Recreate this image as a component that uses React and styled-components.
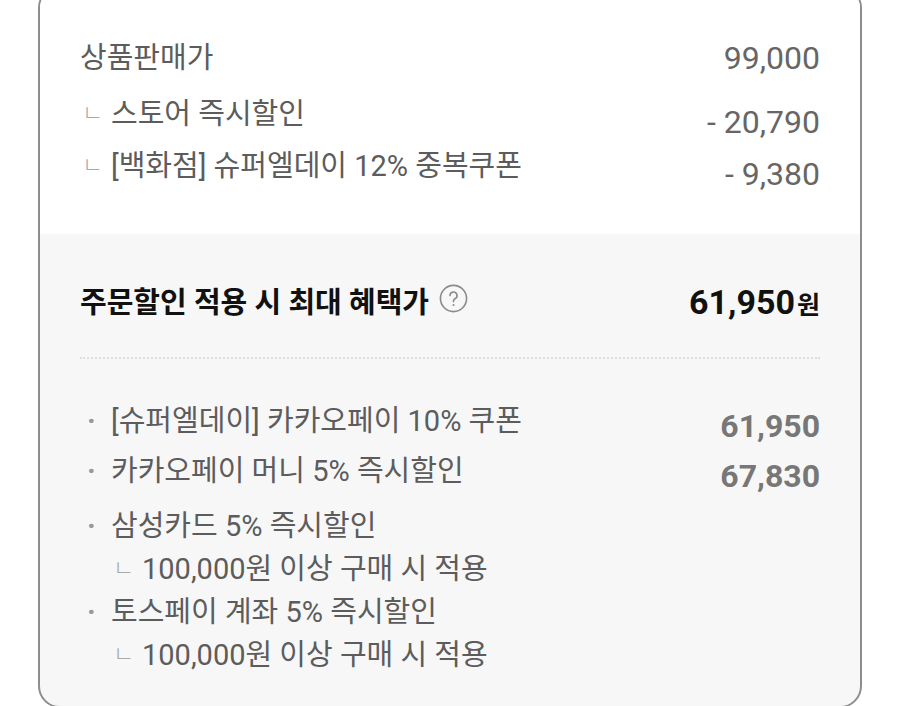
import React from 'react';
import styled, { createGlobalStyle } from 'styled-components';

const GlobalStyle = createGlobalStyle`
  html, body {
    margin: 0;
    padding: 0;
    background: #ffffff;
  }
  body {
    font-family: "Roboto", "Noto Sans CJK KR", sans-serif;
    overflow: hidden;
  }
`;

const Card = styled.div`
  margin: -14px 0 0 38px;
  width: 820px;
  height: 718px;
  border: 2px solid #8d8d8d;
  border-radius: 22px;
  overflow: hidden;
  display: flex;
  flex-direction: column;
  background: #f7f7f7;
`;

const PriceSection = styled.section`
  background: #ffffff;
  padding: 44px 40px 42px 40px;
  display: flex;
  flex-direction: column;
`;

const Row = styled.div`
  display: flex;
  justify-content: space-between;
  align-items: flex-start;
  height: ${p => p.h || 52}px;
`;

const Label = styled.span`
  font-size: 29px;
  line-height: 52px;
  color: #5c5c5c;
  display: flex;
  align-items: center;
`;

const Corner = styled.span`
  font-size: 23px;
  font-weight: 300;
  color: #a8a8a8;
  width: 31px;
  padding-left: 2px;
  box-sizing: border-box;
`;

const Value = styled.span`
  font-size: 32px;
  line-height: 52px;
  color: #666666;
  margin-top: ${p => p.shift || 0}px;
`;

const BenefitSection = styled.section`
  flex: 1;
  padding: 36px 40px 0 40px;
  display: flex;
  flex-direction: column;
`;

const TotalRow = styled.div`
  display: flex;
  justify-content: space-between;
  align-items: center;
  height: 60px;
  padding-bottom: 27px;
  border-bottom: 2px dotted #dedede;
`;

const TotalLabel = styled.div`
  display: flex;
  align-items: center;
  gap: 10px;
  font-size: 29px;
  font-weight: 700;
  color: #111111;
`;

const TotalPrice = styled.div`
  font-size: 34px;
  font-weight: 700;
  color: #111111;
  margin-top: 4px;
  span {
    font-size: 25px;
    margin-left: 2px;
  }
`;

const HelpIcon = styled.svg`
  width: 29px;
  height: 29px;
  margin-top: -4px;
`;

const List = styled.div`
  padding-top: 40px;
  display: flex;
  flex-direction: column;
`;

const Item = styled.div`
  display: flex;
  flex-direction: column;
  margin-bottom: ${p => p.gap || 0}px;
`;

const ItemLine = styled.div`
  display: flex;
  justify-content: space-between;
  align-items: flex-start;
  height: 44px;
`;

const ItemLabel = styled.span`
  font-size: 29px;
  line-height: 44px;
  color: #5c5c5c;
  display: flex;
  align-items: center;
`;

const Bullet = styled.span`
  width: 31px;
  padding-left: 7px;
  box-sizing: border-box;
  color: #999999;
  font-weight: 700;
`;

const SubLine = styled.div`
  display: flex;
  align-items: center;
  padding-left: 31px;
  font-size: 29px;
  line-height: 42px;
  color: #5c5c5c;
`;

const ItemValue = styled.span`
  font-size: 32px;
  font-weight: 700;
  line-height: 44px;
  color: #777777;
  margin-top: 5px;
`;

const Help = () => (
  <HelpIcon viewBox="0 0 28 28">
    <circle cx="14" cy="14" r="12.6" fill="none" stroke="#8c8c8c" strokeWidth="1.6" />
    <path d="M10.6 11.2a3.4 3.4 0 1 1 4.9 3c-1 .5-1.5 1.2-1.5 2.2v.6" fill="none" stroke="#8c8c8c" strokeWidth="1.6" strokeLinecap="round" />
    <circle cx="14" cy="20.2" r="1" fill="#8c8c8c" />
  </HelpIcon>
);

const benefits = [
  { label: '[슈퍼엘데이] 카카오페이 10% 쿠폰', value: '61,950', gap: 6 },
  { label: '카카오페이 머니 5% 즉시할인', value: '67,830', gap: 11 },
  { label: '삼성카드 5% 즉시할인', sub: '100,000원 이상 구매 시 적용', gap: 0 },
  { label: '토스페이 계좌 5% 즉시할인', sub: '100,000원 이상 구매 시 적용', gap: 0 },
];

export default function App() {
  return (
    <>
      <GlobalStyle />
      <Card>
        <PriceSection>
          <Row h={56}>
            <Label>상품판매가</Label>
            <Value>99,000</Value>
          </Row>
          <Row>
            <Label><Corner>ㄴ</Corner>스토어 즉시할인</Label>
            <Value shift={8}>- 20,790</Value>
          </Row>
          <Row>
            <Label><Corner>ㄴ</Corner>[백화점] 슈퍼엘데이 12% 중복쿠폰</Label>
            <Value shift={8}>- 9,380</Value>
          </Row>
        </PriceSection>
        <BenefitSection>
          <TotalRow>
            <TotalLabel>주문할인 적용 시 최대 혜택가 <Help /></TotalLabel>
            <TotalPrice>61,950<span>원</span></TotalPrice>
          </TotalRow>
          <List>
            {benefits.map(b => (
              <Item key={b.label} gap={b.gap}>
                <ItemLine>
                  <ItemLabel><Bullet>·</Bullet>{b.label}</ItemLabel>
                  {b.value && <ItemValue>{b.value}</ItemValue>}
                </ItemLine>
                {b.sub && (
                  <SubLine><Corner>ㄴ</Corner>{b.sub}</SubLine>
                )}
              </Item>
            ))}
          </List>
        </BenefitSection>
      </Card>
    </>
  );
}
